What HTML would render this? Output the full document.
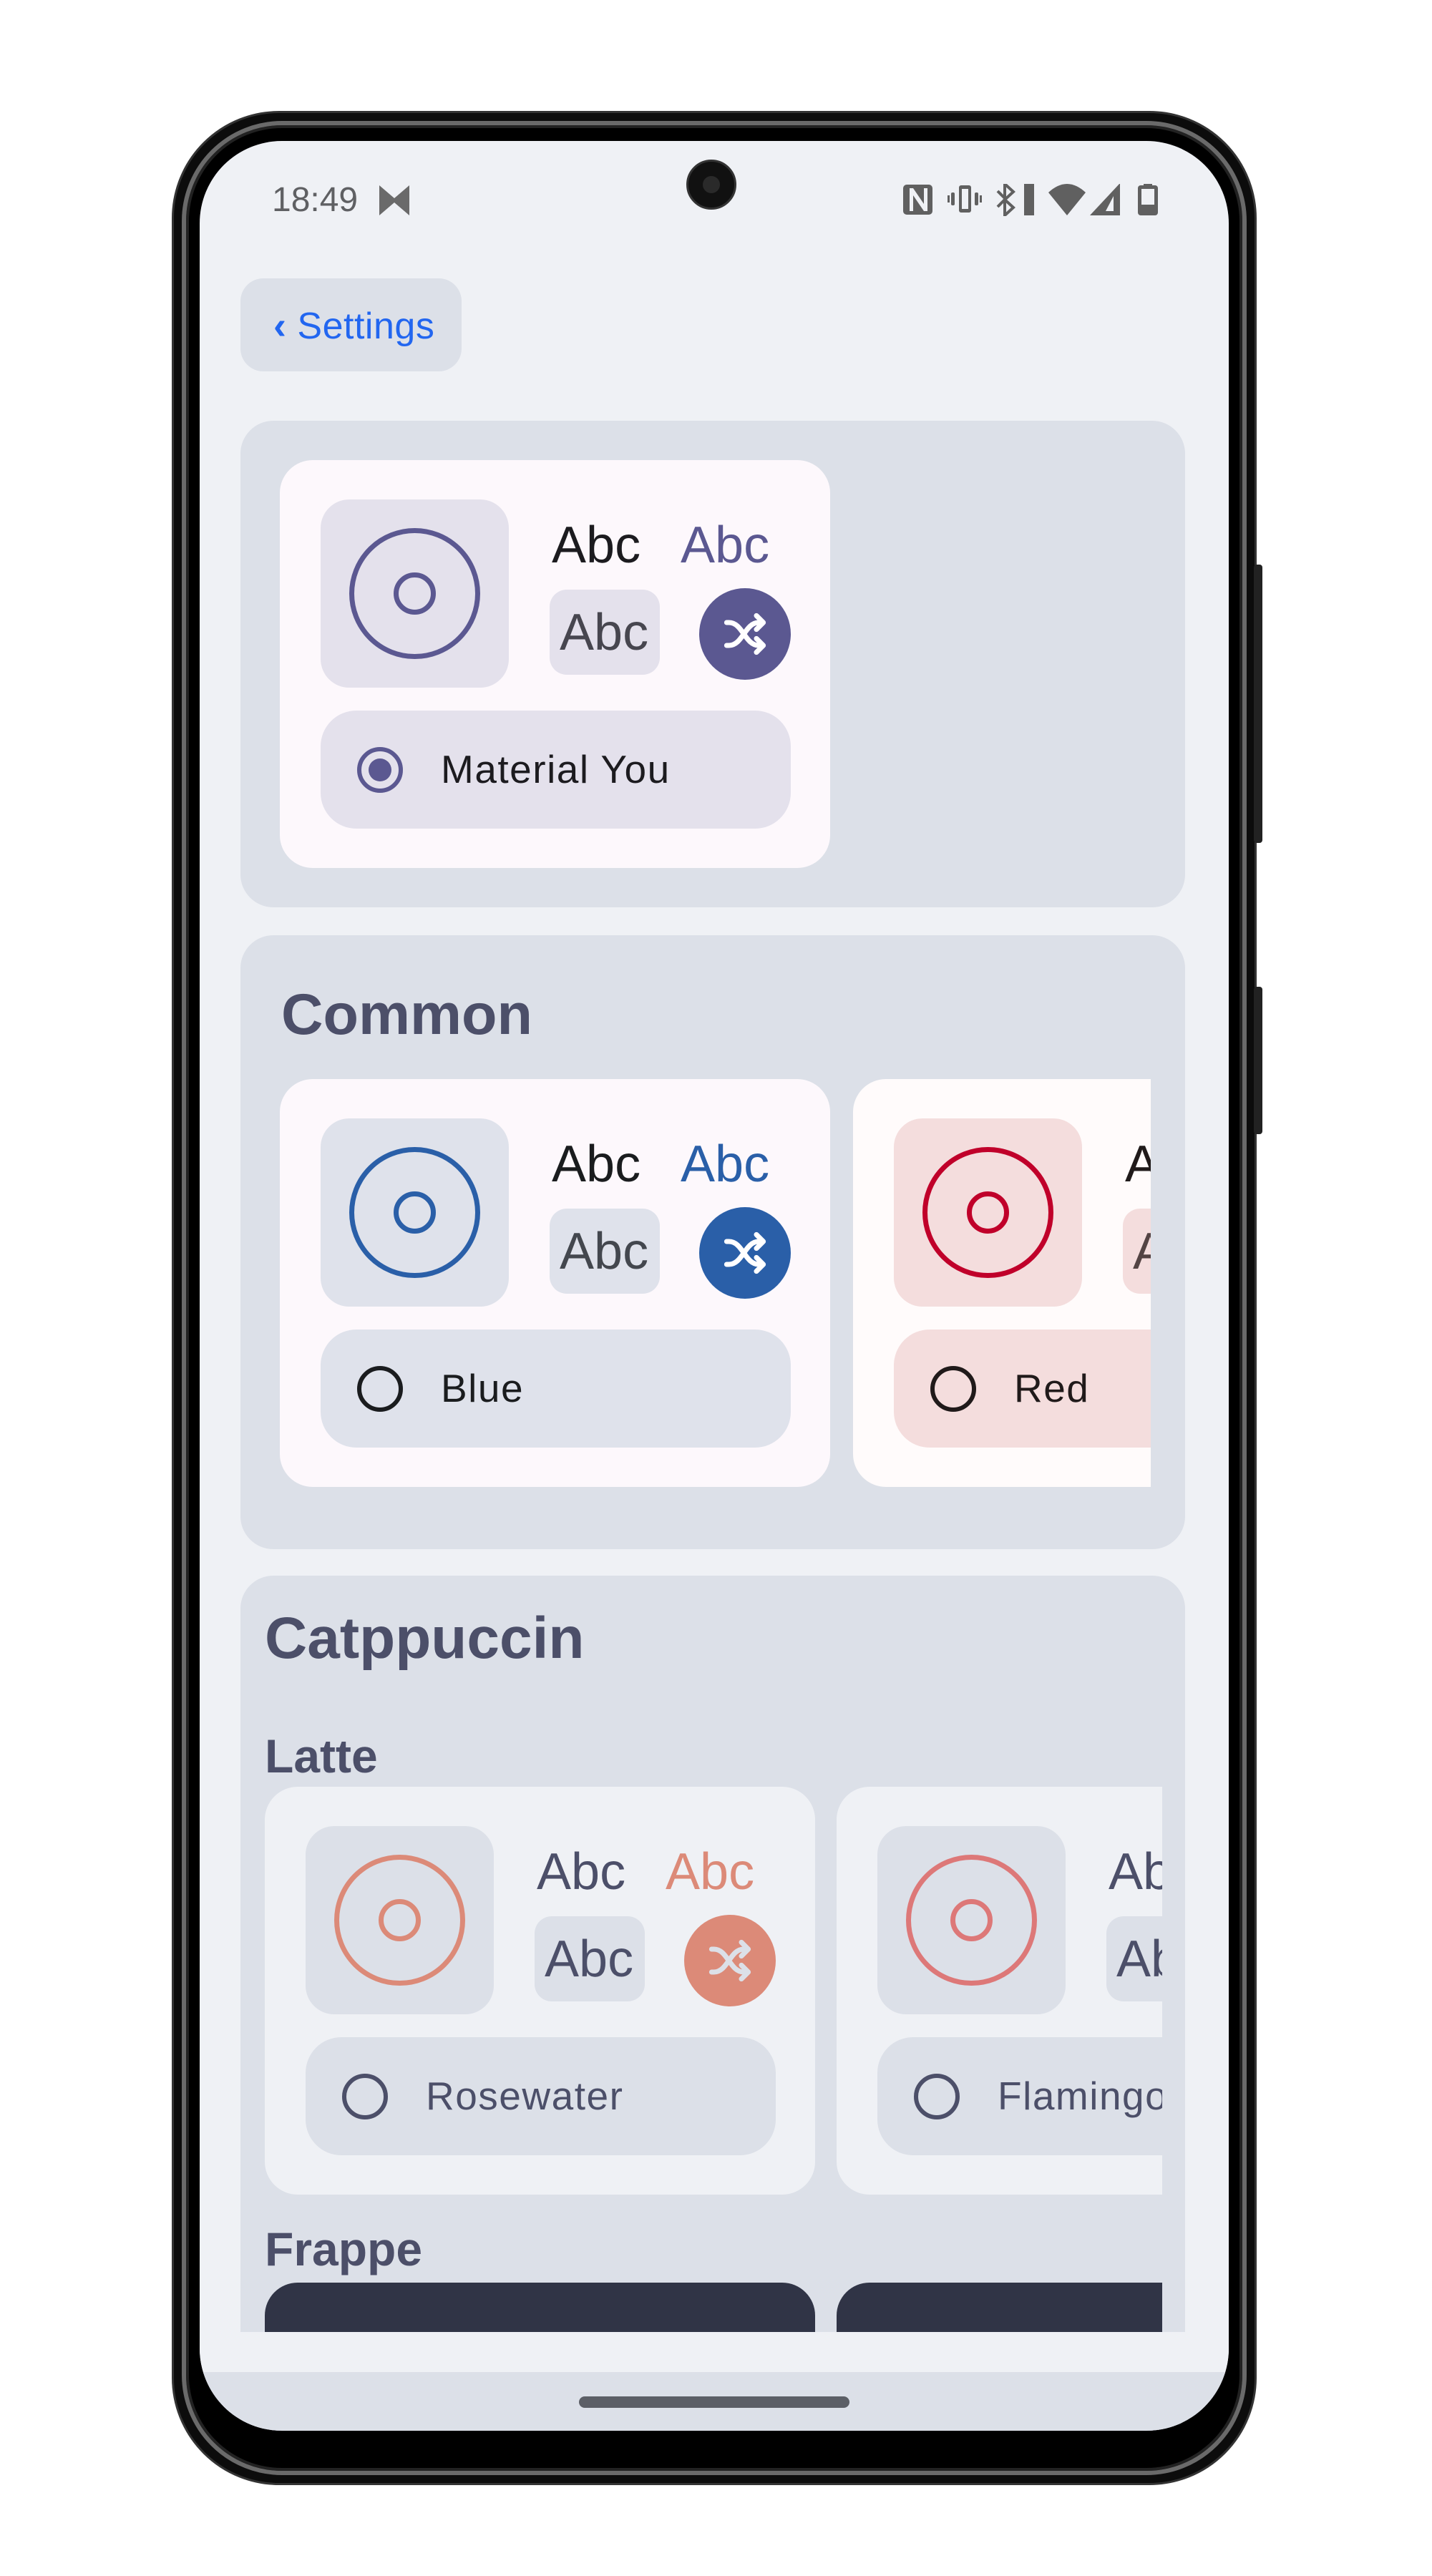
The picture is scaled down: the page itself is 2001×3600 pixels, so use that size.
<!DOCTYPE html>
<html><head><meta charset="utf-8">
<style>
*{margin:0;padding:0;box-sizing:border-box}
html,body{width:2001px;height:3600px;background:#fff;overflow:hidden;font-family:"Liberation Sans",sans-serif}
.abs{position:absolute}
.phone{position:absolute;left:240px;top:155px;width:1516px;height:3318px;border-radius:150px;background:#0c0c0c;border:3px solid #333}
.phone2{position:absolute;left:254px;top:169px;width:1488px;height:3290px;border-radius:140px;background:#000;border:6px solid #6a6a6a;box-shadow:inset 0 0 0 4px #222}
.screen{position:absolute;left:279px;top:197px;width:1438px;height:3200px;border-radius:115px;background:#eff1f5;overflow:hidden}
.sec{position:absolute;background:#dce0e8;border-radius:46px;overflow:hidden}
.card{position:absolute;width:769px;height:570px;border-radius:46px}
.box{position:absolute;left:57px;top:55px;width:263px;height:263px;border-radius:40px}
.t{position:absolute;font-size:72px;line-height:80px;white-space:nowrap}
.sbox{position:absolute;left:377px;top:181px;width:154px;height:119px;border-radius:24px}
.sbox span{position:absolute;left:14px;top:20px;font-size:72px;line-height:80px}
.sh{position:absolute;left:586px;top:179px;width:128px;height:128px;border-radius:50%}
.row{position:absolute;left:57px;top:350px;width:657px;height:165px;border-radius:50px}
.row .r{position:absolute;left:51px;top:51px;width:64px;height:64px;border-radius:50%;border:6px solid}
.row span{position:absolute;left:168px;top:50px;font-size:55px;line-height:64px;letter-spacing:1.5px}
.h{position:absolute;font-weight:bold;color:#4c4f69}
</style></head><body>
<div class="phone"></div>
<div class="abs" style="left:1752px;top:789px;width:12px;height:389px;background:#222;border-radius:4px"></div>
<div class="abs" style="left:1752px;top:1379px;width:12px;height:206px;background:#222;border-radius:4px"></div>
<div class="phone2"></div>
<div class="screen">
 <div class="abs" style="left:101px;top:55px;font-size:48px;line-height:56px;color:#5f6063">18:49</div>
 <svg class="abs" style="left:251px;top:62px" width="42" height="42" viewBox="0 0 42 42"><path d="M0 0 L21 18 L42 0 V42 L21 24 L0 42Z" fill="#6a6a6a"/></svg>
 <div class="abs" style="left:680px;top:26px;width:70px;height:70px;border-radius:50%;background:#111;border:3px solid #333"><div style="position:absolute;left:20px;top:20px;width:24px;height:24px;border-radius:50%;background:#2a2a2a"></div></div>
 <svg class="abs" style="left:983px;top:60px" width="360" height="45" viewBox="983 60 360 45">
  <g fill="#606060">
   <rect x="983" y="61" width="41" height="42" rx="5"/>
   <path d="M992 66v32h5V76l15 22h5V66h-5v22L997 66z" fill="#eff1f5"/>
   <rect x="1061" y="62" width="17" height="38" rx="3"/><rect x="1065" y="67" width="9" height="28" fill="#eff1f5"/>
   <rect x="1050" y="72" width="5" height="18" rx="2"/><rect x="1083" y="72" width="5" height="18" rx="2"/>
   <rect x="1045" y="76" width="3" height="10"/><rect x="1090" y="76" width="3" height="10"/>
   <path d="M1125 60 l12 11 -12 11 12 11 -12 11z M1115 70 l10 10 M1115 92 l10-10" stroke="#606060" stroke-width="4" fill="none"/>
   <rect x="1152" y="60" width="14" height="44"/>
   <path d="M1186 72 Q1212 48 1238 72 L1212 104Z"/>
   <path d="M1286 59 V104 H1244Z"/><path d="M1277 77 V98 H1266Z" fill="#eff1f5"/>
   <rect x="1311" y="62" width="28" height="42" rx="4"/><rect x="1319" y="57" width="12" height="6"/>
   <rect x="1316" y="67" width="18" height="22" fill="#eff1f5"/>
  </g>
 </svg>

 <div class="abs" style="left:57px;top:192px;width:309px;height:130px;border-radius:32px;background:#dce0e8"></div>
 <div class="abs" style="left:103px;top:228px;font-size:52px;line-height:60px;color:#2266f0;letter-spacing:0.5px"><b style="font-size:54px">‹</b> Settings</div>

 <div class="sec" style="left:57px;top:391px;width:1320px;height:680px">
  <div class="card" style="left:55px;top:55px;background:#fdf8fc">
   <div class="box" style="background:#e4e1ec"><svg width="263" height="263"><circle cx="131.5" cy="131.5" r="88" fill="none" stroke="#5b5891" stroke-width="7"/><circle cx="131.5" cy="131.5" r="26" fill="none" stroke="#5b5891" stroke-width="7"/></svg></div>
   <div class="t" style="left:380px;top:79px;color:#1c1b1f">Abc</div>
   <div class="t" style="left:560px;top:79px;color:#5b5891">Abc</div>
   <div class="sbox" style="background:#e4e1ec"><span style="color:#47464f">Abc</span></div>
   <div class="sh" style="background:#5b5891"><svg width="128" height="128" viewBox="-8 -8 40 40"><g fill="none" stroke="#fff" stroke-width="2.2" stroke-linecap="round" stroke-linejoin="round"><path d="M4 7h1C11 7 12 17 18 17h2M4 17h1C11 17 12 7 18 7h2M17 4l3 3-3 3M17 14l3 3-3 3"/></g></svg></div>
   <div class="row" style="background:#e4e1ec"><div class="r" style="border-color:#5b5891"><div style="position:absolute;left:10px;top:10px;width:32px;height:32px;border-radius:50%;background:#5b5891"></div></div><span style="color:#1c1b1f">Material You</span></div>
  </div>
 </div>

 <div class="sec" style="left:57px;top:1110px;width:1320px;height:858px">
  <div class="h" style="left:57px;top:66px;font-size:81px;line-height:90px">Common</div>
  <div class="abs" style="left:0;top:0;width:1272px;height:858px;overflow:hidden">
   <div class="card" style="left:55px;top:201px;background:#fdf8fc">
    <div class="box" style="background:#dfe2eb"><svg width="263" height="263"><circle cx="131.5" cy="131.5" r="88" fill="none" stroke="#2a5fa8" stroke-width="7"/><circle cx="131.5" cy="131.5" r="26" fill="none" stroke="#2a5fa8" stroke-width="7"/></svg></div>
    <div class="t" style="left:380px;top:79px;color:#1a1c1e">Abc</div>
    <div class="t" style="left:560px;top:79px;color:#2a5fa8">Abc</div>
    <div class="sbox" style="background:#dfe2eb"><span style="color:#43474e">Abc</span></div>
    <div class="sh" style="background:#2a5fa8"><svg width="128" height="128" viewBox="-8 -8 40 40"><g fill="none" stroke="#fff" stroke-width="2.2" stroke-linecap="round" stroke-linejoin="round"><path d="M4 7h1C11 7 12 17 18 17h2M4 17h1C11 17 12 7 18 7h2M17 4l3 3-3 3M17 14l3 3-3 3"/></g></svg></div>
    <div class="row" style="background:#dfe2eb"><div class="r" style="border-color:#1a1c1e"></div><span style="color:#1a1c1e">Blue</span></div>
   </div>
   <div class="card" style="left:856px;top:201px;background:#fffbfb">
    <div class="box" style="background:#f4dddd"><svg width="263" height="263"><circle cx="131.5" cy="131.5" r="88" fill="none" stroke="#c0002a" stroke-width="7"/><circle cx="131.5" cy="131.5" r="26" fill="none" stroke="#c0002a" stroke-width="7"/></svg></div>
    <div class="t" style="left:380px;top:79px;color:#201a1a">Abc</div>
    <div class="sbox" style="background:#f4dddd"><span style="color:#534343">Abc</span></div>
    <div class="row" style="background:#f4dddd"><div class="r" style="border-color:#201a1a"></div><span style="color:#201a1a">Red</span></div>
   </div>
  </div>
 </div>

 <div class="sec" style="left:57px;top:2005px;width:1320px;height:1300px">
  <div class="h" style="left:34px;top:43px;font-size:82px;line-height:90px">Catppuccin</div>
  <div class="h" style="left:34px;top:216px;font-size:66px;line-height:72px">Latte</div>
  <div class="abs" style="left:0;top:0;width:1288px;height:1300px;overflow:hidden">
   <div class="card" style="left:34px;top:295px;background:#eff1f5">
    <div class="box" style="background:#dce0e8"><svg width="263" height="263"><circle cx="131.5" cy="131.5" r="88" fill="none" stroke="#dc8a78" stroke-width="7"/><circle cx="131.5" cy="131.5" r="26" fill="none" stroke="#dc8a78" stroke-width="7"/></svg></div>
    <div class="t" style="left:380px;top:79px;color:#4c4f69">Abc</div>
    <div class="t" style="left:560px;top:79px;color:#dc8a78">Abc</div>
    <div class="sbox" style="background:#dce0e8"><span style="color:#4c4f69">Abc</span></div>
    <div class="sh" style="background:#dc8a78"><svg width="128" height="128" viewBox="-8 -8 40 40"><g fill="none" stroke="#dce0e8" stroke-width="2.2" stroke-linecap="round" stroke-linejoin="round"><path d="M4 7h1C11 7 12 17 18 17h2M4 17h1C11 17 12 7 18 7h2M17 4l3 3-3 3M17 14l3 3-3 3"/></g></svg></div>
    <div class="row" style="background:#dce0e8"><div class="r" style="border-color:#4c4f69"></div><span style="color:#4c4f69">Rosewater</span></div>
   </div>
   <div class="card" style="left:833px;top:295px;background:#eff1f5">
    <div class="box" style="background:#dce0e8"><svg width="263" height="263"><circle cx="131.5" cy="131.5" r="88" fill="none" stroke="#dd7878" stroke-width="7"/><circle cx="131.5" cy="131.5" r="26" fill="none" stroke="#dd7878" stroke-width="7"/></svg></div>
    <div class="t" style="left:380px;top:79px;color:#4c4f69">Abc</div>
    <div class="sbox" style="background:#dce0e8"><span style="color:#4c4f69">Abc</span></div>
    <div class="row" style="background:#dce0e8"><div class="r" style="border-color:#4c4f69"></div><span style="color:#4c4f69">Flamingo</span></div>
   </div>
   <div class="h" style="left:34px;top:905px;font-size:66px;line-height:72px">Frappe</div>
   <div class="card" style="left:34px;top:988px;background:#303446"></div>
   <div class="card" style="left:833px;top:988px;background:#303446"></div>
  </div>
 </div>
 <div class="abs" style="left:0;top:3062px;width:1438px;height:60px;background:#eff1f5"></div>
 <div class="abs" style="left:0;top:3118px;width:1438px;height:90px;background:#dce0e8"></div>
 <div class="abs" style="left:530px;top:3152px;width:378px;height:16px;border-radius:8px;background:#5c5f66"></div>
</div>
</body></html>
